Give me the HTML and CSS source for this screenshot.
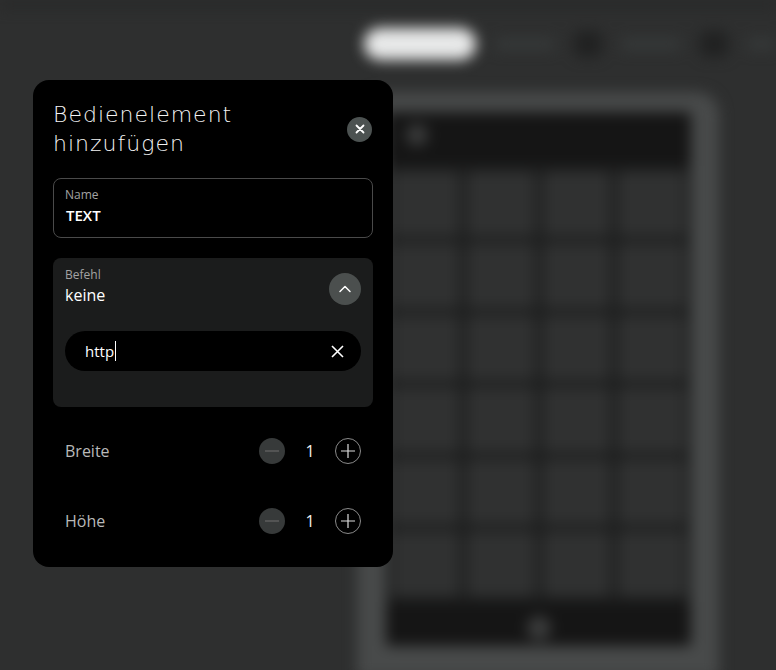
FILE: index.html
```html
<!DOCTYPE html>
<html lang="de">
<head>
    <meta charset="UTF-8">
    <meta name="viewport" content="width=device-width, initial-scale=1.0">
    <title>Bedienelement hinzufügen</title>
    <link rel="stylesheet" href="styles.css">
</head>
<body>
    <div class="app">
        <header class="topbar">
            <span class="nav-pill active"></span>
            <span class="nav-pill"></span>
            <span class="nav-square"></span>
            <span class="nav-pill"></span>
            <span class="nav-square"></span>
            <span class="nav-pill short"></span>
        </header>

        <div class="phone">
            <div class="screen">
                <div class="screen-head"><span class="dot"></span></div>
                <div class="tiles">
                    <span></span><span></span><span></span><span></span>
                    <span></span><span></span><span></span><span></span>
                    <span></span><span></span><span></span><span></span>
                    <span></span><span></span><span></span><span></span>
                    <span></span><span></span><span></span><span></span>
                    <span></span><span></span><span></span><span></span>
                </div>
                <div class="screen-foot"><span class="dot"></span></div>
            </div>
        </div>
    </div>

    <div class="modal">
        <div class="modal-head">
            <h2>Bedienelement<br>hinzufügen</h2>
            <button class="close-btn" aria-label="Schließen">
                <svg width="10" height="10" viewBox="0 0 10 10"><path d="M1.5 1.5l7 7M8.5 1.5l-7 7" stroke="#fff" stroke-width="1.8" stroke-linecap="round"/></svg>
            </button>
        </div>

        <div class="field">
            <label>Name</label>
            <div class="field-value">TEXT</div>
        </div>

        <div class="command">
            <div class="command-head">
                <div>
                    <label>Befehl</label>
                    <div class="command-value">keine</div>
                </div>
                <button class="toggle-btn" aria-label="Einklappen">
                    <svg width="14" height="14" viewBox="0 0 14 14"><path d="M2 9.5l5-5 5 5" fill="none" stroke="#fff" stroke-width="1.5" stroke-linecap="round" stroke-linejoin="round"/></svg>
                </button>
            </div>
            <div class="search">
                <span class="search-text">http<span class="caret"></span></span>
                <svg width="13" height="13" viewBox="0 0 13 13"><path d="M1 1l11 11M12 1L1 12" stroke="#fff" stroke-width="1.6"/></svg>
            </div>
        </div>

        <div class="size-row">
            <span class="size-label">Breite</span>
            <div class="stepper">
                <button class="step minus"><svg width="14" height="2" viewBox="0 0 14 2"><path d="M0 1h14" stroke="#666" stroke-width="1.2"/></svg></button>
                <span class="step-value">1</span>
                <button class="step plus"><svg width="14" height="14" viewBox="0 0 14 14"><path d="M0 7h14M7 0v14" stroke="#ddd" stroke-width="1.2"/></svg></button>
            </div>
        </div>

        <div class="size-row">
            <span class="size-label">Höhe</span>
            <div class="stepper">
                <button class="step minus"><svg width="14" height="2" viewBox="0 0 14 2"><path d="M0 1h14" stroke="#666" stroke-width="1.2"/></svg></button>
                <span class="step-value">1</span>
                <button class="step plus"><svg width="14" height="14" viewBox="0 0 14 14"><path d="M0 7h14M7 0v14" stroke="#ddd" stroke-width="1.2"/></svg></button>
            </div>
        </div>
    </div>
</body>
</html>
```

FILE: styles.css
```css
body {
    margin: 0;
    width: 776px;
    height: 670px;
    overflow: hidden;
    background: #2e2f2f;
    font-family: "Open Sans", "DejaVu Sans", sans-serif;
    color: #fff;
    position: relative;
}

button {
    border: none;
    padding: 0;
    cursor: pointer;
    display: flex;
    align-items: center;
    justify-content: center;
}

/* blurred app behind the dialog */
.app {
    filter: blur(7px);
    height: 670px;
    display: flex;
    flex-direction: column;
    border-top: 8px solid #272828;
}

.topbar {
    height: 72px;
    display: flex;
    align-items: center;
    gap: 18px;
    padding-left: 364px;
    box-sizing: border-box;
}

.nav-pill {
    width: 62px;
    height: 12px;
    border-radius: 6px;
    background: #363939;
}

.nav-pill.active {
    width: 112px;
    height: 32px;
    border-radius: 16px;
    background: #e8e9e9;
}

.nav-pill.short {
    width: 30px;
}

.nav-square {
    width: 28px;
    height: 26px;
    border-radius: 6px;
    background: #212222;
}

.phone {
    margin: 12px 0 0 357px;
    width: 362px;
    flex: 1;
    background: #484a4a;
    border-radius: 22px 22px 0 0;
    padding: 20px 28px 0 29px;
    box-sizing: border-box;
}

.screen {
    background: #2a2b2b;
    display: flex;
    flex-direction: column;
    height: 534px;
    border-radius: 4px;
    overflow: hidden;
}

.screen-head {
    height: 54px;
    background: #151515;
    padding: 12px 0 0 20px;
    box-sizing: border-box;
}

.dot {
    display: block;
    width: 22px;
    height: 22px;
    border-radius: 50%;
    background: #3a3b3b;
}

.tiles {
    flex: 1;
    display: grid;
    grid-template-columns: repeat(4, 1fr);
    grid-auto-rows: 1fr;
    gap: 8px;
    padding: 6px;
    background: #1f2020;
}

.tiles span {
    background: #303131;
    border-radius: 6px;
}

.screen-foot {
    height: 44px;
    background: #151515;
    display: flex;
    justify-content: center;
    align-items: flex-end;
    padding-bottom: 6px;
    box-sizing: border-box;
}

.screen-foot .dot {
    width: 24px;
    height: 24px;
    background: #3b3c3c;
}

/* dialog */
.modal {
    position: absolute;
    left: 33px;
    top: 80px;
    width: 360px;
    height: 487px;
    background: #000;
    border-radius: 16px;
    padding: 20px 20px 0 20px;
    box-sizing: border-box;
}

.modal-head {
    display: flex;
    justify-content: space-between;
    align-items: center;
}

.modal-head h2 {
    margin: 0;
    font-family: "DejaVu Sans", sans-serif;
    font-weight: 200;
    font-size: 22px;
    line-height: 29px;
    letter-spacing: 1px;
    color: #f4f4f4;
}

.close-btn {
    width: 25px;
    height: 25px;
    border-radius: 50%;
    background: #4c5251;
    margin-right: 1px;
}

.field {
    margin-top: 20px;
    height: 60px;
    border: 1px solid #4a4a4a;
    border-radius: 8px;
    padding: 8px 11px 0 11px;
    box-sizing: border-box;
}

label {
    display: block;
    font-size: 12px;
    line-height: 16px;
    color: #a3a3a3;
}

.field-value {
    margin-top: 2px;
    padding-left: 1px;
    font-size: 15px;
    font-weight: 600;
    line-height: 20px;
}

.command {
    margin-top: 20px;
    height: 149px;
    background: #1b1c1c;
    border-radius: 8px;
    padding: 9px 12px 0 12px;
    box-sizing: border-box;
}

.command-head {
    display: flex;
    justify-content: space-between;
    align-items: center;
}

.command-value {
    font-size: 16px;
    line-height: 22px;
    margin-top: 1px;
}

.toggle-btn {
    width: 32px;
    height: 32px;
    border-radius: 50%;
    background: #4b4f4e;
    margin-top: 4px;
}

.search {
    margin-top: 25px;
    height: 40px;
    border-radius: 20px;
    background: #000;
    display: flex;
    align-items: center;
    justify-content: space-between;
    padding: 0 17px 0 20px;
}

.search-text {
    font-size: 15px;
    display: flex;
    align-items: center;
}

.caret {
    display: inline-block;
    width: 1px;
    height: 20px;
    background: #fff;
    margin-left: 1px;
}

.size-row {
    display: flex;
    justify-content: space-between;
    align-items: center;
    height: 26px;
    padding: 0 12px;
}

.command + .size-row {
    margin-top: 31px;
}

.size-row + .size-row {
    margin-top: 44px;
}

.size-label {
    font-size: 16px;
    color: #b9b9b9;
}

.stepper {
    display: flex;
    align-items: center;
}

.step {
    width: 26px;
    height: 26px;
    border-radius: 50%;
    box-sizing: border-box;
}

.step.minus {
    background: #373a3a;
}

.step.plus {
    background: transparent;
    border: 1.5px solid #8a8a8a;
}

.step-value {
    width: 50px;
    text-align: center;
    font-size: 16px;
    color: #f0f0f0;
}
```
